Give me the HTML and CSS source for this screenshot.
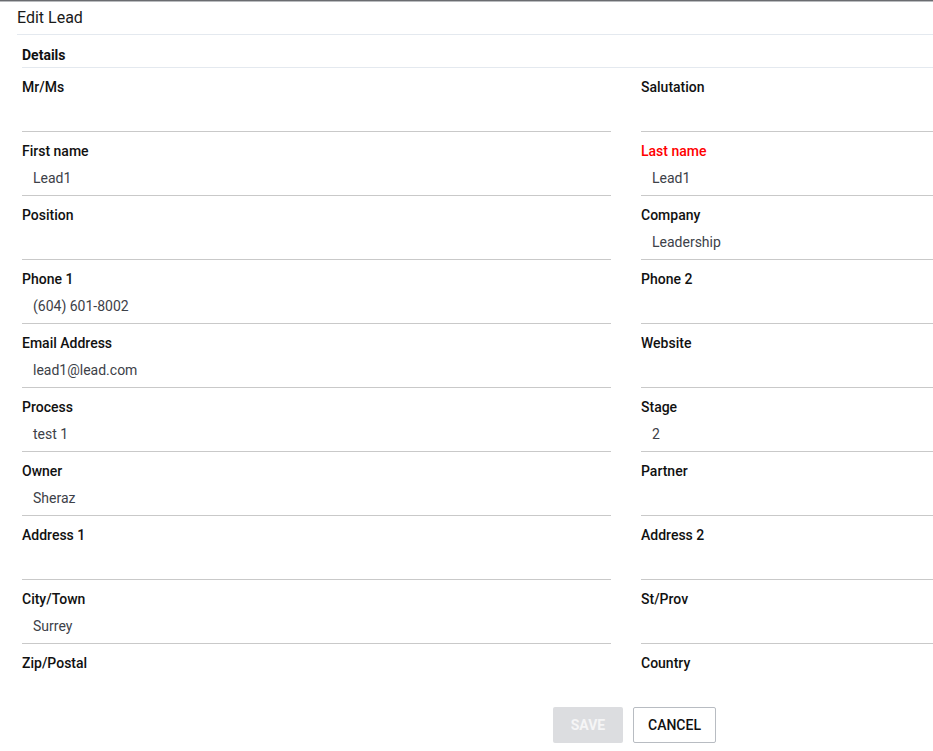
FILE: index.html
```html
<!DOCTYPE html>
<html>
<head>
<meta charset="utf-8">
<link rel="stylesheet" href="styles.css">
</head>
<body>
<div class="viewport">
<div class="topbar"></div>
<div class="page">
  <div class="title">Edit Lead</div>
  <div class="scroll">
    <div class="section">Details</div>
    <div class="grid">
      <div class="field"><div class="label">Mr/Ms</div><div class="value"></div></div>
      <div class="field"><div class="label">Salutation</div><div class="value"></div></div>
      <div class="field"><div class="label">First name</div><div class="value">Lead1</div></div>
      <div class="field"><div class="label required">Last name</div><div class="value">Lead1</div></div>
      <div class="field"><div class="label">Position</div><div class="value"></div></div>
      <div class="field"><div class="label">Company</div><div class="value">Leadership</div></div>
      <div class="field"><div class="label">Phone 1</div><div class="value">(604) 601-8002</div></div>
      <div class="field"><div class="label">Phone 2</div><div class="value"></div></div>
      <div class="field"><div class="label">Email Address</div><div class="value">lead1@lead.com</div></div>
      <div class="field"><div class="label">Website</div><div class="value"></div></div>
      <div class="field"><div class="label">Process</div><div class="value">test 1</div></div>
      <div class="field"><div class="label">Stage</div><div class="value">2</div></div>
      <div class="field"><div class="label">Owner</div><div class="value">Sheraz</div></div>
      <div class="field"><div class="label">Partner</div><div class="value"></div></div>
      <div class="field"><div class="label">Address 1</div><div class="value"></div></div>
      <div class="field"><div class="label">Address 2</div><div class="value"></div></div>
      <div class="field"><div class="label">City/Town</div><div class="value">Surrey</div></div>
      <div class="field"><div class="label">St/Prov</div><div class="value"></div></div>
      <div class="field"><div class="label">Zip/Postal</div><div class="value"></div></div>
      <div class="field"><div class="label">Country</div><div class="value"></div></div>
    </div>
  </div>
  <div class="footer">
    <button class="btn btn-save" disabled>SAVE</button>
    <button class="btn btn-cancel">CANCEL</button>
  </div>
</div>
</div>
</body>
</html>
```
FILE: styles.css
```css
html, body {
  margin: 0;
  padding: 0;
  background: #fff;
  font-family: Roboto, "Liberation Sans", Arial, sans-serif;
  color: #111;
}
.viewport {
  width: 933px;
  height: 751px;
  overflow: hidden;
}
.topbar {
  height: 1px;
  background: #6a6c70;
  border-bottom: 1px solid #b9bbbe;
}
.page {
  margin-left: 17px;
  width: 1235px;
}
.title {
  font-size: 16px;
  line-height: 20px;
  padding-top: 6px;
  padding-bottom: 6px;
  color: #1a1a1a;
  border-bottom: 1px solid #e4e9ef;
}
.scroll {
  height: 661px;
  overflow: hidden;
  padding-left: 5px;
}
.section {
  font-size: 14px;
  font-weight: 700;
  line-height: 20px;
  padding-top: 10px;
  padding-bottom: 2px;
  border-bottom: 1px solid #e4e9ef;
}
.grid {
  display: grid;
  grid-template-columns: 589px 589px;
  column-gap: 30px;
}
.field {
  padding-top: 9px;
  padding-bottom: 7px;
  border-bottom: 1px solid #c9c9c9;
}
.label {
  font-size: 14px;
  font-weight: 500;
  line-height: 20px;
  color: #111;
}
.label.required {
  color: #f00;
}
.value {
  margin-top: 7px;
  height: 20px;
  font-size: 14px;
  line-height: 20px;
  color: #3d4148;
  padding-left: 11px;
}
.footer {
  display: flex;
  justify-content: center;
  gap: 10px;
  padding-top: 11px;
}
.btn {
  height: 36px;
  font-family: Roboto, "Liberation Sans", Arial, sans-serif;
  font-size: 14px;
  font-weight: 500;
  border-radius: 2px;
  padding: 0 14px;
  cursor: pointer;
}
.btn-save {
  width: 70px;
  background: #dcdde0;
  color: #f5f5f6;
  border: none;
  font-weight: 700;
}
.btn-cancel {
  width: 83px;
  background: #fff;
  color: #111;
  border: 1px solid #b8bcc2;
}
```
